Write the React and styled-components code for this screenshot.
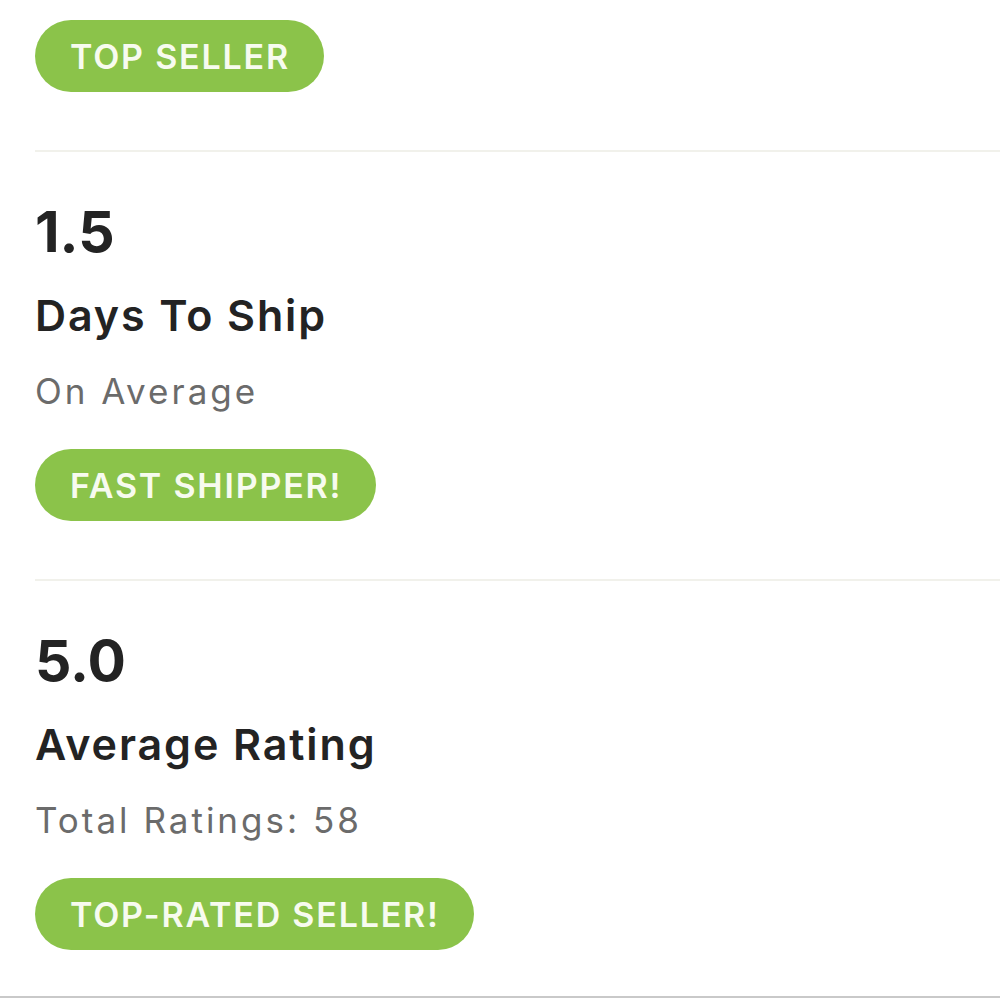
import React from "react";
import styled, { createGlobalStyle } from "styled-components";

const Global = createGlobalStyle`
  html, body { margin: 0; padding: 0; background: #ffffff; }
  body { font-family: Inter, "Liberation Sans", sans-serif; -webkit-font-smoothing: antialiased; }
`;

const Page = styled.div`
  width: 1000px;
  height: 998px;
  box-sizing: border-box;
  border-bottom: 2px solid #c9c9c9;
  overflow: hidden;
  padding-left: 35px;
  padding-top: 20px;
  display: flex;
  flex-direction: column;
`;

const Section = styled.section`
  display: flex;
  flex-direction: column;
  align-items: flex-start;
  padding-top: ${(p) => p.$top || 0}px;
  padding-bottom: 58px;
  border-bottom: ${(p) => (p.$last ? "none" : "2px solid #f1f1eb")};
`;

const Stat = styled.div`
  font-size: 57px;
  line-height: 1;
  font-weight: 700;
  color: #232323;
  letter-spacing: 0px;
`;

const Title = styled.div`
  font-size: 43px;
  line-height: 1;
  font-weight: 600;
  color: #232323;
  margin-top: 34px;
  letter-spacing: 1.9px;
`;

const Sub = styled.div`
  font-size: 35px;
  line-height: 1;
  font-weight: 400;
  color: #6b6b6b;
  margin-top: 37px;
  letter-spacing: 3px;
`;

const Badge = styled.span`
  display: inline-flex;
  align-items: center;
  height: 72px;
  box-sizing: border-box;
  padding: 0 34px 0 35px;
  border-radius: 36px;
  background: #8bc34a;
  color: #f7fbef;
  font-size: 34px;
  font-weight: 600;
  letter-spacing: 1.8px;
  margin-top: ${(p) => p.$mt || 0}px;
`;

const sections = [
  { stat: "1.5", title: "Days To Ship", sub: "On Average", badge: "FAST SHIPPER!" },
  { stat: "5.0", title: "Average Rating", sub: "Total Ratings: 58", badge: "TOP-RATED SELLER!" },
];

export default function App() {
  return (
    <Page>
      <Global />
      <Section>
        <Badge>TOP SELLER</Badge>
      </Section>
      {sections.map((s, i) => (
        <Section key={s.stat} $top={51} $last={i === sections.length - 1}>
          <Stat>{s.stat}</Stat>
          <Title>{s.title}</Title>
          <Sub>{s.sub}</Sub>
          <Badge $mt={40}>{s.badge}</Badge>
        </Section>
      ))}
    </Page>
  );
}
